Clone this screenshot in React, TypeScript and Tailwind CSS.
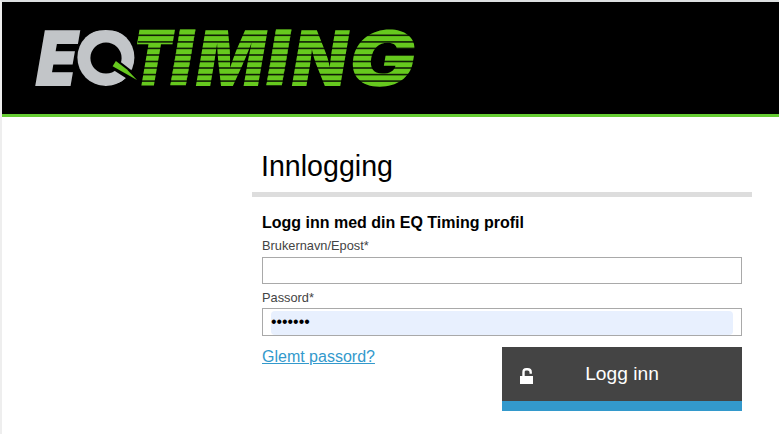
import React from 'react';

type Glyph = { char: string; x: number; stretch: number; slant?: number; weight?: number };

const BASELINE = 85.7;
const CAP_HEIGHT = 55.7;

const timing: Glyph[] = [
  { char: 'T', x: 129.7, stretch: 0.69, weight: 3 },
  { char: 'I', x: 167, stretch: 1, weight: 0.5 },
  { char: 'M', x: 192.6, stretch: 0.94 },
  { char: 'I', x: 263, stretch: 1, weight: 0.5 },
  { char: 'N', x: 288.4, stretch: 0.935 },
  { char: 'G', x: 345.5, stretch: 1.15 },
];

const gaps = [35.3, 41.9, 48.4, 55, 61.5, 68, 74.6, 81.1];

// weight thickens the strokes while keeping the cap height the same
const Letter: React.FC<Glyph> = ({ char, x, stretch, slant = -9.8, weight = 0 }) => (
  <text
    transform={`translate(${x} ${BASELINE - weight / 2}) skewX(${slant}) scale(${stretch} ${1 - weight / CAP_HEIGHT})`}
    strokeWidth={weight}
  >
    {char}
  </text>
);

const Logo: React.FC = () => (
  <svg
    width="500"
    height="112"
    viewBox="2 2 500 112"
    className="block font-['Inter',sans-serif] text-[76.6px] font-black"
    role="img"
    aria-label="EQ Timing"
  >
    <clipPath id="dial">
      <circle cx="105.9" cy="57.5" r="28.5" />
    </clipPath>
    <g fill="#c2c5c8" stroke="#c2c5c8">
      <Letter char="E" x={33.2} stretch={0.84} weight={2} />
      <g clipPath="url(#dial)">
        <Letter char="Q" x={77} stretch={0.97} slant={0} weight={10} />
      </g>
    </g>
    <circle cx="106" cy="58" r="15.6" fill="#000" />
    <path d="M117.5 59.5 L134 72.2 L132 82 L111 68.5 Z" fill="#000" />
    <path d="M115.9 61 L126.7 69.3 L137 80 L112.6 66.3 Z" fill="#66c91e" />
    <g fill="#66c91e" stroke="#66c91e">
      {timing.map((glyph) => (
        <Letter key={glyph.x} {...glyph} />
      ))}
    </g>
    {gaps.map((y) => (
      <rect key={y} x="138" y={y - 0.8} width="280" height="1.6" fill="#000" fillOpacity="0.85" />
    ))}
  </svg>
);

const App: React.FC = () => {
  return (
    <div className="h-screen overflow-hidden border-t-2 border-l-2 border-t-[#dcdfe0] border-l-[#eeeeee] bg-white font-['Liberation_Sans',Arial,sans-serif] text-black">
      <header className="h-[115px] border-b-3 border-[#66cc33] bg-black">
        <Logo />
      </header>

      <main className="ml-[250px] w-[500px]">
        <h1 className="h-[80px] border-b-5 border-[#dddddd] pt-[32px] pl-[9px] text-[28.6px] leading-[34px]">Innlogging</h1>
        <form className="px-2.5 pt-4" onSubmit={(e) => e.preventDefault()}>
          <h2 className="text-base leading-[19px] font-bold">Logg inn med din EQ Timing profil</h2>
          <label htmlFor="username" className="block h-[25px] pt-[7px] text-[12.8px] leading-[14px] text-[#444444]">
            Brukernavn/Epost*
          </label>
          <div className="h-[27px] border border-[#a9a9a9] px-2">
            <input id="username" type="text" className="block h-full w-full outline-none" />
          </div>
          <label htmlFor="password" className="block h-6 pt-[7px] text-[12.8px] leading-[14px] text-[#444444]">
            Passord*
          </label>
          <div className="h-[28px] border border-[#a9a9a9] px-2 pt-0.5">
            <input
              id="password"
              type="password"
              defaultValue="passord"
              className="block h-[24px] w-full rounded bg-[#e8f0fe] pb-0.5 text-[15.8px] outline-none"
            />
          </div>
          <div className="flex items-start justify-between pt-[11px]">
            <a href="#" className="text-base leading-[19px] text-[#3399cc] underline">Glemt passord?</a>
            <button type="submit" className="relative h-16 w-60 border-b-10 border-[#3399cc] bg-[#444444] text-[19.2px] text-white">
              <svg width="13" height="16" viewBox="0 0 13 16" className="absolute top-[21px] left-[18px]">
                <path d="M0 8h13v8H0z" fill="#fff" />
                <path d="M3.5 8V4.2Q3.5 1.2 6.4 1.2H7.6Q10.7 1.2 10.7 4.2V5.8" fill="none" stroke="#fff" strokeWidth="2.4" />
              </svg>
              Logg inn
            </button>
          </div>
        </form>
      </main>
    </div>
  );
};

export default App;
